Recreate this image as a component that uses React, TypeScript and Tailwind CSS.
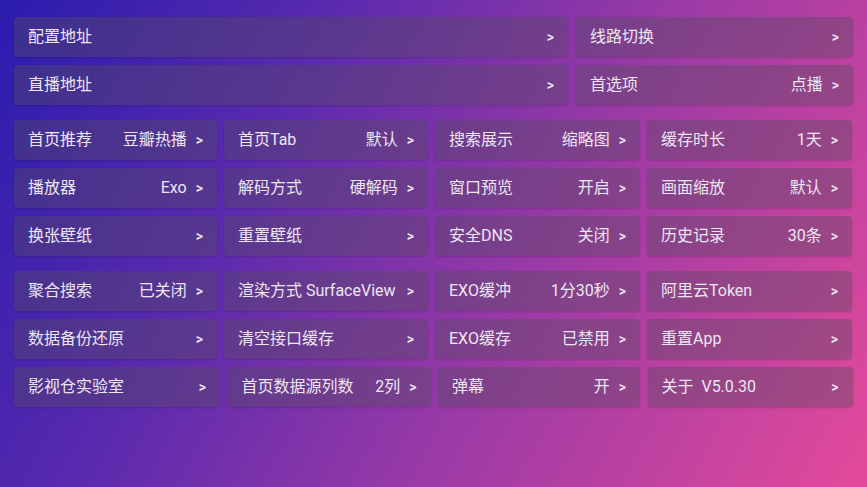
const font = { fontFamily: '"Roboto", "Noto Sans CJK SC", sans-serif' }

type Item = { label: string; value?: string }

const Card = ({ label, value }: Item) => {
    return (
        <div className="h-10 flex items-center justify-between rounded pl-[14px] pr-[14px] bg-[rgba(85,75,95,0.4)] shadow-[0_1px_2px_rgba(0,0,0,0.15)] text-[#ece6f2] text-base">
            <span className="whitespace-pre">{label}</span>
            <span className="flex items-center whitespace-nowrap">
                {value && <span className="mr-[9px]">{value}</span>}
                <span className="text-sm font-semibold">&gt;</span>
            </span>
        </div>
    )
}

const groupA: Item[] = [
    { label: '首页推荐', value: '豆瓣热播' },
    { label: '首页Tab', value: '默认' },
    { label: '搜索展示', value: '缩略图' },
    { label: '缓存时长', value: '1天' },
    { label: '播放器', value: 'Exo' },
    { label: '解码方式', value: '硬解码' },
    { label: '窗口预览', value: '开启' },
    { label: '画面缩放', value: '默认' },
    { label: '换张壁纸' },
    { label: '重置壁纸' },
    { label: '安全DNS', value: '关闭' },
    { label: '历史记录', value: '30条' },
]

const groupB: Item[] = [
    { label: '聚合搜索', value: '已关闭' },
    { label: '渲染方式 SurfaceView' },
    { label: 'EXO缓冲', value: '1分30秒' },
    { label: '阿里云Token' },
    { label: '数据备份还原' },
    { label: '清空接口缓存' },
    { label: 'EXO缓存', value: '已禁用' },
    { label: '重置App' },
]

const lastRow: Item[] = [
    { label: '影视仓实验室' },
    { label: '首页数据源列数', value: '2列' },
    { label: '弹幕', value: '开' },
    { label: '关于  V5.0.30' },
]

const App = () => {
    return (
        <div style={font} className="w-[867px] h-[487px] overflow-hidden bg-[linear-gradient(118deg,#2a1cae_0%,#5a2aae_30%,#9a3aa6_60%,#e44a9a_100%)] pt-[17px] px-[14px]">
            <div className="flex flex-col gap-2">
                <div className="grid grid-cols-[554px_277px] gap-2">
                    <Card label="配置地址" />
                    <Card label="线路切换" />
                </div>
                <div className="grid grid-cols-[554px_277px] gap-2">
                    <Card label="直播地址" />
                    <Card label="首选项" value="点播" />
                </div>
            </div>
            <div className="mt-[15px] grid grid-cols-[203px_204px_205px_205px] gap-x-[7px] gap-y-2">
                {groupA.map((it) => (
                    <Card key={it.label} {...it} />
                ))}
            </div>
            <div className="mt-[15px] grid grid-cols-[203px_204px_205px_205px] gap-x-[7px] gap-y-2">
                {groupB.map((it) => (
                    <Card key={it.label} {...it} />
                ))}
            </div>
            <div className="mt-2 grid grid-cols-[206px_203px_202px_205px] gap-x-[7.5px]">
                {lastRow.map((it) => (
                    <Card key={it.label} {...it} />
                ))}
            </div>
        </div>
    )
}

export default App
